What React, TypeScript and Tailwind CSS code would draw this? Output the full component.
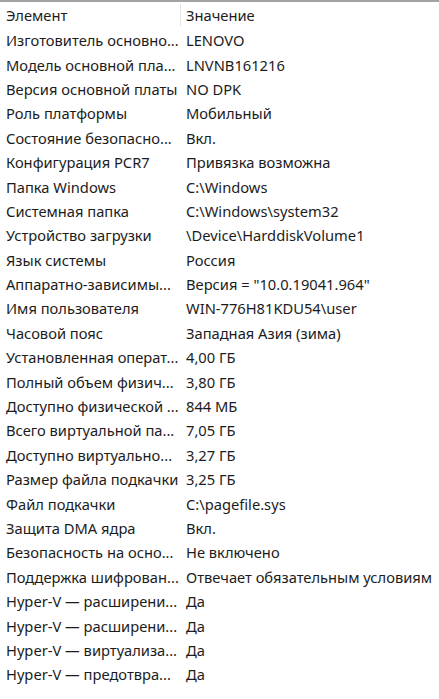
const rows: [string, string][] = [
  ["Изготовитель основно...", "LENOVO"],
  ["Модель основной пла...", "LNVNB161216"],
  ["Версия основной платы", "NO DPK"],
  ["Роль платформы", "Мобильный"],
  ["Состояние безопасно...", "Вкл."],
  ["Конфигурация PCR7", "Привязка возможна"],
  ["Папка Windows", "C:\\Windows"],
  ["Системная папка", "C:\\Windows\\system32"],
  ["Устройство загрузки", "\\Device\\HarddiskVolume1"],
  ["Язык системы", "Россия"],
  ["Аппаратно-зависимы...", "Версия = \"10.0.19041.964\""],
  ["Имя пользователя", "WIN-776H81KDU54\\user"],
  ["Часовой пояс", "Западная Азия (зима)"],
  ["Установленная операт...", "4,00 ГБ"],
  ["Полный объем физич...", "3,80 ГБ"],
  ["Доступно физической ...", "844 МБ"],
  ["Всего виртуальной па...", "7,05 ГБ"],
  ["Доступно виртуально...", "3,27 ГБ"],
  ["Размер файла подкачки", "3,25 ГБ"],
  ["Файл подкачки", "C:\\pagefile.sys"],
  ["Защита DMA ядра", "Вкл."],
  ["Безопасность на осно...", "Не включено"],
  ["Поддержка шифрован...", "Отвечает обязательным условиям"],
  ["Hyper-V — расширени...", "Да"],
  ["Hyper-V — расширени...", "Да"],
  ["Hyper-V — виртуализа...", "Да"],
  ["Hyper-V — предотвра...", "Да"],
];

function Row({ name, value }: { name: string; value: string }) {
  return (
    <div className="flex h-[24.4px] items-center">
      <div className="w-[181px] shrink-0 overflow-hidden whitespace-nowrap pl-[6px]">{name}</div>
      <div className="overflow-hidden whitespace-nowrap pl-[5px]">{value}</div>
    </div>
  );
}

export default function App() {
  return (
    <div
      className="h-[699px] w-[439px] overflow-hidden border-t-2 border-[#a3a3a3] bg-white text-[14.7px] text-[#1c1c1c]"
      style={{ fontFamily: '"Noto Sans", "Open Sans", sans-serif' }}
    >
      <div className="flex h-[26px] items-center">
        <div className="w-[181px] shrink-0 border-r border-[#e3e3e3] pl-[6px]">Элемент</div>
        <div className="pl-[5px]">Значение</div>
      </div>
      {rows.map(([n, v], i) => (
        <Row key={i} name={n} value={v} />
      ))}
    </div>
  );
}
